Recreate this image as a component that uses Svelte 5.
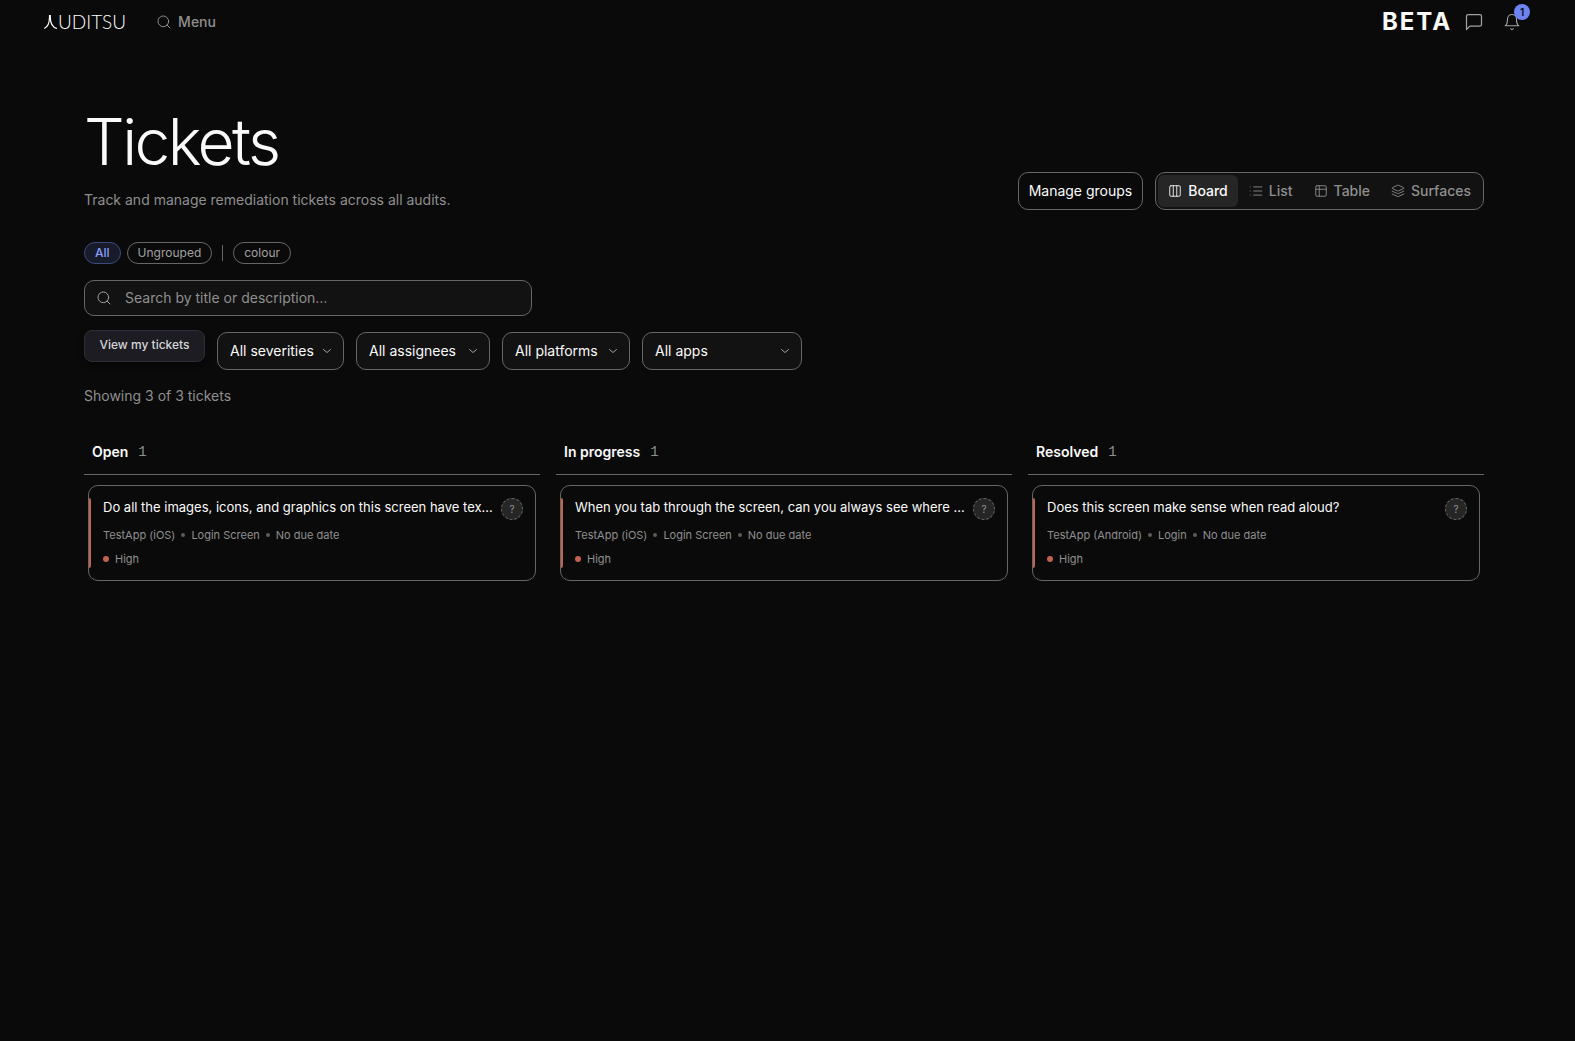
<script>
  const views = ['Board', 'List', 'Table', 'Surfaces'];
  let view = $state('Board');
  let query = $state('');

  const filters = [
    { id: 'severity', label: 'Severity', text: 'All severities' },
    { id: 'assignee', label: 'Assignee', text: 'All assignees' },
    { id: 'platform', label: 'Platform', text: 'All platforms' },
    { id: 'app', label: 'App', text: 'All apps' },
  ];

  const columns = [
    {
      name: 'Open',
      title: 'Do all the images, icons, and graphics on this screen have tex…',
      meta: ['TestApp (iOS)', 'Login Screen', 'No due date'],
    },
    {
      name: 'In progress',
      title: 'When you tab through the screen, can you always see where …',
      meta: ['TestApp (iOS)', 'Login Screen', 'No due date'],
    },
    {
      name: 'Resolved',
      title: 'Does this screen make sense when read aloud?',
      meta: ['TestApp (Android)', 'Login', 'No due date'],
    },
  ];
</script>

<div class="page">
  <header class="topbar">
    <a class="logo" href="#home" aria-label="Auditsu">
      <svg width="14" height="14" viewBox="0 0 14 14" aria-hidden="true">
        <path d="M5.500 0v2C5.500 8 3.500 12 .3 13.500M6.300 0v2c0 6 2.700 10.500 6.700 11.500" />
      </svg>
      <span>UDITSU</span>
    </a>
    <button class="menu" type="button">
      <svg class="icon" width="16" height="16" viewBox="0 0 24 24" aria-hidden="true">
        <circle cx="11" cy="11" r="8" /><path d="m21 21-4.300-4.300" />
      </svg>
      Menu
    </button>
    <div class="actions">
      <strong class="beta">BETA</strong>
      <button class="icon-btn" type="button" aria-label="Messages">
        <svg class="icon" width="20" height="20" viewBox="0 0 24 24" aria-hidden="true">
          <path d="M21 15a2 2 0 0 1-2 2H7l-4 4V5a2 2 0 0 1 2-2h14a2 2 0 0 1 2 2z" />
        </svg>
      </button>
      <button class="icon-btn" type="button" aria-label="Notifications">
        <svg class="icon" width="18" height="18" viewBox="0 0 24 24" aria-hidden="true">
          <path d="M6 8a6 6 0 0 1 12 0c0 7 3 9 3 9H3s3-2 3-9" />
          <path d="M10.300 21a1.940 1.940 0 0 0 3.400 0" />
        </svg>
        <span class="badge">1</span>
      </button>
    </div>
  </header>

  <main>
    <div class="heading">
      <div>
        <h1>Tickets</h1>
        <p>Track and manage remediation tickets across all audits.</p>
      </div>
      <div class="tools">
        <button class="manage" type="button">Manage groups</button>
        <div class="views" role="group" aria-label="View">
          {#each views as v}
            <button type="button" class:active={view === v} aria-pressed={view === v} onclick={() => (view = v)}>
              <svg class="icon" width="14" height="14" viewBox="0 0 24 24" aria-hidden="true">
                {#if v === 'Board'}
                  <rect x="3" y="3" width="18" height="18" rx="2" /><path d="M9 3v18M15 3v18" />
                {:else if v === 'List'}
                  <path d="M8 5h14M8 12h14M8 19h14M2 5h.01M2 12h.01M2 19h.01" />
                {:else if v === 'Table'}
                  <rect x="3" y="3" width="18" height="18" rx="2" /><path d="M3 9h18M9 3v18" />
                {:else}
                  <path d="m12.830 2.180a2 2 0 0 0-1.660 0L2.600 6.080a1 1 0 0 0 0 1.830l8.580 3.910a2 2 0 0 0 1.660 0l8.580-3.900a1 1 0 0 0 0-1.830Z" />
                  <path d="m22 12.200-9.170 4.170a2 2 0 0 1-1.660 0L2 12.200" />
                  <path d="m22 17.200-9.170 4.170a2 2 0 0 1-1.660 0L2 17.200" />
                {/if}
              </svg>
              {v}
            </button>
          {/each}
        </div>
      </div>
    </div>

    <div class="chips">
      <button class="chip selected" type="button">All</button>
      <button class="chip" type="button">Ungrouped</button>
      <span class="divider"></span>
      <button class="chip" type="button">colour</button>
    </div>

    <label class="search">
      <svg class="icon" width="16" height="16" viewBox="0 0 24 24" aria-hidden="true">
        <circle cx="11" cy="11" r="8" /><path d="m21 21-4.300-4.300" />
      </svg>
      <input type="text" aria-label="Search tickets" placeholder="Search by title or description…" bind:value={query} />
    </label>

    <div class="filters">
      <button class="mine" type="button">View my tickets</button>
      {#each filters as f}
        <label class="select {f.id}">
          <select aria-label={f.label}><option>{f.text}</option></select>
          <svg class="icon" width="12" height="12" viewBox="0 0 24 24" aria-hidden="true"><path d="m5 9 7 6 7-6" /></svg>
        </label>
      {/each}
    </div>

    <p class="summary">Showing 3 of 3 tickets</p>

    <div class="board">
      {#each columns as col}
        <section>
          <h2>{col.name}<span>1</span></h2>
          <article>
            <div class="row">
              <h3>{col.title}</h3>
              <span class="avatar" title="Unassigned">?</span>
            </div>
            <ul>
              {#each col.meta as m}<li>{m}</li>{/each}
            </ul>
            <div class="severity">High</div>
          </article>
        </section>
      {/each}
    </div>
  </main>
</div>

<style>
  :global(body) {
    background: #0a0a0a;
  }
  .page {
    color: #fafafa;
    font: 14px/20px Inter, 'Liberation Sans', sans-serif;
    padding-right: 7px;
  }
  .page * {
    box-sizing: border-box;
  }
  button,
  select,
  input {
    font: inherit;
    color: inherit;
    margin: 0;
    padding: 0;
    background: none;
    border: 0;
  }
  .icon {
    flex: none;
    fill: none;
    stroke: currentColor;
    stroke-width: 1.5;
    stroke-linecap: round;
    stroke-linejoin: round;
  }
  .topbar {
    display: flex;
    align-items: center;
    height: 44px;
    padding: 0 37px 0 44px;
  }
  .logo {
    display: flex;
    align-items: center;
    color: #fff;
    text-decoration: none;
    font: 300 19px/20px Lato, sans-serif;
  }
  .logo svg {
    fill: none;
    stroke: currentColor;
    stroke-width: 1.2;
  }
  .menu {
    display: flex;
    align-items: center;
    gap: 6px;
    margin-left: 30px;
    font-weight: 500;
    color: #8f8f8f;
  }
  .actions {
    display: flex;
    align-items: center;
    margin-left: auto;
  }
  .beta {
    font-size: 24px;
    line-height: 32px;
    font-weight: 700;
    letter-spacing: 0.08em;
    margin-right: 3px;
  }
  .icon-btn {
    position: relative;
    display: grid;
    place-items: center;
    width: 38px;
    height: 32px;
    color: #a1a1a1;
  }
  .badge {
    position: absolute;
    top: -2px;
    right: 1px;
    width: 16px;
    height: 16px;
    border-radius: 8px;
    background: #6c83f2;
    color: #0a0a0a;
    font-size: 10px;
    line-height: 16px;
    font-weight: 600;
  }
  main {
    max-width: 1400px;
    margin: 0 auto;
    padding-top: 66px;
  }
  .heading {
    display: flex;
    justify-content: space-between;
    align-items: flex-end;
  }
  h1 {
    margin: 0;
    font-size: 64px;
    line-height: 64px;
    font-weight: 300;
    letter-spacing: -0.04em;
  }
  .heading p {
    margin: 16px 0 0;
    color: #8f8f8f;
  }
  .tools {
    display: flex;
    gap: 12px;
  }
  .manage {
    height: 38px;
    padding: 0 10px;
    border: 1px solid #666;
    border-radius: 10px;
  }
  .views {
    display: flex;
    gap: 1px;
    height: 38px;
    padding: 2px;
    border: 1px solid #666;
    border-radius: 10px;
    background: #121212;
  }
  .views button {
    display: flex;
    align-items: center;
    gap: 6px;
    padding: 0 10px;
    border-radius: 6px;
    font-weight: 500;
    color: #8f8f8f;
  }
  .views .active {
    background: #262626;
    color: #fafafa;
  }
  .chips {
    display: flex;
    align-items: center;
    gap: 6px;
    margin-top: 32px;
  }
  .chip {
    height: 22px;
    padding: 0 10px;
    border: 1px solid #666;
    border-radius: 11px;
    font-size: 12px;
    line-height: 16px;
    color: #a1a1a1;
  }
  .selected {
    border-color: #3c4a80;
    background: #181b2a;
    color: #8b9ff8;
    font-weight: 500;
  }
  .divider {
    width: 1px;
    height: 16px;
    margin: 0 4px;
    background: #666;
  }
  .search {
    display: flex;
    align-items: center;
    gap: 13px;
    width: 448px;
    max-width: 100%;
    height: 36px;
    margin-top: 16px;
    padding: 0 11px;
    border: 1px solid #666;
    border-radius: 10px;
    background: #121212;
    color: #a1a1a1;
  }
  .search input {
    flex: 1;
    outline: 0;
  }
  .search input::placeholder {
    color: #8f8f8f;
    opacity: 1;
  }
  .filters {
    display: flex;
    flex-wrap: wrap;
    align-items: flex-end;
    gap: 12px;
    margin-top: 14px;
  }
  .mine {
    align-self: flex-start;
    width: 121px;
    height: 32px;
    padding-bottom: 2px;
    border: 1px solid #2e2e38;
    border-radius: 8px;
    background: #1c1c22;
    box-shadow: 0 3px 6px #0006;
    font-size: 12px;
    font-weight: 500;
    color: #d4d4d8;
  }
  .select {
    display: grid;
    align-items: center;
    margin-top: 2px;
    color: #a1a1a1;
  }
  .select > * {
    grid-area: 1 / 1;
  }
  .select .icon {
    justify-self: end;
    margin-right: 11px;
    pointer-events: none;
    stroke-width: 2;
  }
  select {
    appearance: none;
    width: 100%;
    height: 38px;
    padding: 0 12px;
    border: 1px solid #666;
    border-radius: 10px;
    background: #121212;
    color: #fafafa;
  }
  .severity.select {
    width: 127px;
  }
  .assignee {
    width: 134px;
  }
  .platform {
    width: 128px;
  }
  .app {
    width: 160px;
  }
  .summary {
    margin: 16px 0 0;
    color: #8f8f8f;
  }
  .board {
    display: grid;
    grid-template-columns: repeat(3, minmax(0, 1fr));
    gap: 16px;
    margin-top: 24px;
  }
  h2 {
    display: flex;
    gap: 10px;
    margin: 0;
    padding: 12px 8px;
    border-bottom: 1px solid #666;
    font-size: 14px;
    line-height: 20px;
    font-weight: 600;
  }
  h2 span {
    font-family: 'Liberation Mono', monospace;
    font-weight: 400;
    color: #8f8f8f;
  }
  article {
    position: relative;
    margin: 10px 4px 0;
    padding: 12px 12px 12px 14px;
    border: 1px solid #666;
    border-radius: 10px;
  }
  article::before {
    content: '';
    position: absolute;
    left: 0;
    top: 12px;
    bottom: 12px;
    width: 2px;
    border-radius: 0 2px 2px 0;
    background: #c4614f;
  }
  .row {
    display: flex;
    justify-content: space-between;
    gap: 6px;
  }
  h3 {
    min-width: 0;
    margin: 0;
    overflow: hidden;
    text-overflow: ellipsis;
    font-size: 13px;
    line-height: 18px;
    font-weight: 400;
    white-space: nowrap;
  }
  .avatar {
    flex: none;
    width: 22px;
    height: 22px;
    border: 1px dashed #666;
    border-radius: 11px;
    background: #262626;
    color: #8f8f8f;
    font-size: 10px;
    line-height: 20px;
    text-align: center;
  }
  ul {
    display: flex;
    align-items: center;
    gap: 6px;
    margin: 6px 0 0;
    padding: 0;
    list-style: none;
    font-size: 11px;
    line-height: 18px;
    color: #8f8f8f;
  }
  li {
    display: flex;
    align-items: center;
    gap: 6px;
  }
  li + li::before {
    content: '';
    width: 4px;
    height: 4px;
    border-radius: 2px;
    background: #5c5c5c;
  }
  article .severity {
    display: flex;
    align-items: center;
    gap: 6px;
    margin-top: 6px;
    font-size: 11px;
    line-height: 18px;
    color: #8f8f8f;
  }
  article .severity::before {
    content: '';
    width: 6px;
    height: 6px;
    border-radius: 3px;
    background: #c4614f;
  }
</style>
